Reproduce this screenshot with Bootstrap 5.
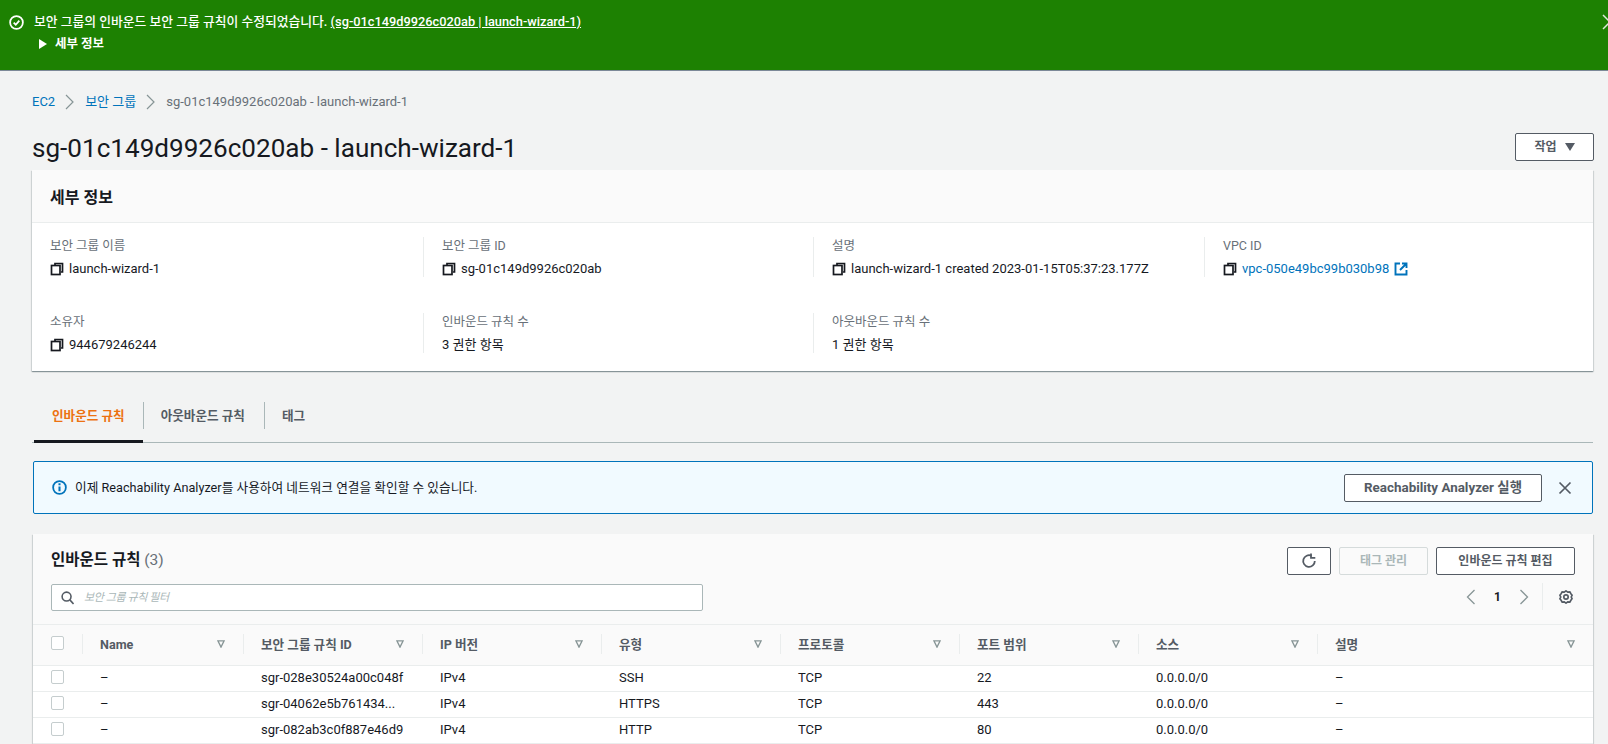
<!DOCTYPE html>
<html lang="ko"><head><meta charset="utf-8"><title>보안 그룹</title>
<link href="https://cdn.jsdelivr.net/npm/bootstrap@5.3.0/dist/css/bootstrap.min.css" rel="stylesheet">
<style>
:root{--ink:#16191f;--muted:#687078;--grey:#545b64;--line:#eaeded;--blue:#0073bb}
html,body{height:744px;overflow:hidden}
body{background:#f2f3f3;color:var(--ink);font-family:"Roboto","Noto Sans CJK KR",sans-serif;font-size:13px;line-height:18px}
svg{display:block;flex:none}
a{color:var(--blue);text-decoration:none}
.flash-bar{height:71px;background:#1d8102;border-bottom:1px solid #7d8998;color:#fff;padding:13px 0 0 9px;font-size:12.8px;font-weight:500;overflow:hidden}
.flash-bar a{color:#fff;text-decoration:underline}
.flash-head{gap:10px}
.flash-more{margin:4px 0 0 30px;font-weight:700;font-size:12.5px}
.flash-x{right:-10px;top:14px}
.page-body{padding:0 14px 0 32px}
.crumbs{height:18px;margin-top:22px;font-size:13px;color:var(--muted)}
.page-title{font-size:26.1px;line-height:30px;font-weight:400;margin:0}
.title-row{margin-top:22px;height:37px}
.aws-btn{background:#fff;border:1px solid var(--grey);border-radius:2px;color:var(--grey);font-size:12px;font-weight:700;height:28px;padding:0;display:inline-flex;align-items:center;justify-content:center}
.btn-action{width:79px}
.btn-reach{width:198px;font-size:13.4px}
.btn-refresh{width:44px}
.btn-tags{width:89px}
.btn-edit{width:139px}
.panel{background:#fff;box-shadow:0 1px 1px rgba(0,28,36,.3),1px 1px 1px rgba(0,28,36,.1),-1px 1px 1px rgba(0,28,36,.1)}
.panel-sheet{margin-right:1px}
.panel-head{background:#fafafa;height:53px;border-bottom:1px solid var(--line);padding:3px 18px 0;font-size:16px;font-weight:700}
.details{height:148px;padding:14px 0 0 0;display:grid;grid-template-columns:391px 390px 391px 1fr;grid-template-rows:40px 40px;row-gap:36px}
.detail-cell{padding-left:18px;border-left:1px solid var(--line)}
.detail-cell:nth-child(4n+1){border-left:0}
.detail-label{color:var(--muted);font-size:12.5px;line-height:18px}
.detail-val{margin-top:5px;line-height:18px;font-size:13px;gap:5px}
.tab-strip{margin-top:21px;height:51px;border-bottom:1px solid #aab7b8;position:relative;margin-right:1px}
.tab-item{height:51px;display:flex;align-items:center;font-size:12.6px;font-weight:700;color:var(--grey);position:relative;padding:0 19px 3px 18px}
.tab-item+.tab-item::before{content:"";position:absolute;left:0;top:10px;height:27px;width:1px;background:#aab7b8}
.tab-on{color:#ec7211;box-shadow:inset 0 -3px 0 var(--ink);margin-left:2px;padding:0 18px 3px 18px}
.info-box{margin:18px 1px 0 1px;height:53px;background:#f1faff;border:1px solid var(--blue);border-radius:2px;padding:0 20px 0 18px;font-size:12.7px}
.rules{margin:20px 1px 0 1px;height:211px;overflow:hidden}
.rules-top{background:#fafafa;height:91px;border-bottom:1px solid var(--line);padding:12px 18px 0 18px;position:relative}
.rules-title{font-size:15.5px;font-weight:700;line-height:28px}
.rules-title span{font-weight:400;color:var(--muted)}
.filter-field{height:27px;width:652px;margin-top:10px;background:#fff;border:1px solid #aab7b8;border-radius:2px;padding-left:9px;font-style:italic;color:#aab7b8;font-size:11px;letter-spacing:-.4px;gap:10px}
.rule-table{table-layout:fixed;width:100%;margin:0;border-collapse:collapse;--bs-table-bg:#fff;font-size:13px}
.rule-table thead th{background:#fafafa;height:40px;padding:0 18px;font-weight:700;color:var(--grey);font-size:12.6px;border-bottom:1px solid var(--line);vertical-align:middle;position:relative}
.rule-table td{height:26px;padding:0 18px;border-bottom:1px solid var(--line);color:var(--ink);vertical-align:middle;white-space:nowrap;overflow:hidden}
.rule-table th+th::before{content:"";position:absolute;left:0;top:9px;height:20px;width:1px;background:var(--line)}
.rule-table .tick{padding-left:18px;padding-right:0}
.col-tick{width:49px}.col-name{width:161px}.col-std{width:179px}
.box-tick{display:block;width:13px;height:14px;border:1px solid #c5cdce;border-radius:2px;background:#fff;margin-top:-3px}
.sort-mark{right:18px;top:15px}
.row-tools{top:13px;right:18px}
.pager{top:49px;right:20px;height:27px;color:#aab7b8}
.pager b{color:var(--ink);font-size:12px;margin:0 18px}
.pager-rule{width:1px;height:27px;background:var(--line);margin:0 16px 0 13px}
.tool-off{background:#fafafa;border-color:#d5dbdb;color:#aab7b8}
</style></head><body>
<svg width="0" height="0" class="position-absolute"><defs>
<symbol id="i-copy" viewBox="0 0 14 14"><g fill="none" stroke="#16191f" stroke-width="1.7"><path d="M5 3V1.500h7.500V10H11"/><rect x="1.500" y="3.500" width="8.500" height="9"/></g></symbol>
<symbol id="i-sort" viewBox="0 0 9 9"><path d="M1 1h7L4.500 8z" fill="none" stroke="#879596" stroke-width="1.500"/></symbol>
<symbol id="i-chev" viewBox="0 0 14 16"><path d="M3 1l7 7-7 7" fill="none" stroke="#879596" stroke-width="1.200"/></symbol>
</defs></svg>
<div class="flash-bar position-relative">
  <div class="d-flex align-items-center flash-head">
    <svg width="15" height="15" viewBox="0 0 16 16" fill="none" stroke="#fff" stroke-width="1.900"><circle cx="8" cy="8" r="6.800"/><path d="M5 8.200l2.200 2.200L11 6"/></svg>
    <span>보안 그룹의 인바운드 보안 그룹 규칙이 수정되었습니다. <a href="#">(sg-01c149d9926c020ab | launch-wizard-1)</a></span>
  </div>
  <div class="flash-more d-flex align-items-center gap-2">
    <svg width="8" height="10" viewBox="0 0 8 10" fill="#fff"><path d="M0 0l8 5-8 5z"/></svg><span>세부 정보</span>
  </div>
  <svg class="position-absolute flash-x" width="16" height="16" viewBox="0 0 16 16" fill="none" stroke="#dfe9db" stroke-width="1.500"><path d="M1 1l14 14M15 1L1 15"/></svg>
</div>
<div class="page-body">
  <div class="crumbs d-flex align-items-center">
    <a href="#">EC2</a>
    <svg class="mx-2" width="14" height="16"><use href="#i-chev"/></svg>
    <a href="#">보안 그룹</a>
    <svg class="mx-2" width="14" height="16"><use href="#i-chev"/></svg>
    <span>sg-01c149d9926c020ab - launch-wizard-1</span>
  </div>
  <div class="title-row d-flex justify-content-between align-items-start">
    <h1 class="page-title">sg-01c149d9926c020ab - launch-wizard-1</h1>
    <button class="aws-btn btn-action gap-2">작업 <svg width="10" height="8" viewBox="0 0 10 8" fill="#545b64"><path d="M0 0h10L5 8z"/></svg></button>
  </div>
  <div class="panel panel-sheet">
    <div class="panel-head d-flex align-items-center">세부 정보</div>
    <div class="details">
      <div class="detail-cell"><div class="detail-label">보안 그룹 이름</div><div class="detail-val d-flex align-items-center"><svg width="14" height="14"><use href="#i-copy"/></svg>launch-wizard-1</div></div>
      <div class="detail-cell"><div class="detail-label">보안 그룹 ID</div><div class="detail-val d-flex align-items-center"><svg width="14" height="14"><use href="#i-copy"/></svg>sg-01c149d9926c020ab</div></div>
      <div class="detail-cell"><div class="detail-label">설명</div><div class="detail-val d-flex align-items-center"><svg width="14" height="14"><use href="#i-copy"/></svg>launch-wizard-1 created 2023-01-15T05:37:23.177Z</div></div>
      <div class="detail-cell"><div class="detail-label">VPC ID</div><div class="detail-val d-flex align-items-center"><svg width="14" height="14"><use href="#i-copy"/></svg><a href="#">vpc-050e49bc99b030b98</a><svg width="14" height="14" viewBox="0 0 14 14" fill="none" stroke="#0073bb" stroke-width="1.900"><path d="M6 1.500H1.500v11h11V8M8 1.500h4.500V6M12.500 1.500L6 8"/></svg></div></div>
      <div class="detail-cell"><div class="detail-label">소유자</div><div class="detail-val d-flex align-items-center"><svg width="14" height="14"><use href="#i-copy"/></svg>944679246244</div></div>
      <div class="detail-cell"><div class="detail-label">인바운드 규칙 수</div><div class="detail-val">3 권한 항목</div></div>
      <div class="detail-cell"><div class="detail-label">아웃바운드 규칙 수</div><div class="detail-val">1 권한 항목</div></div>
    </div>
  </div>
  <div class="tab-strip d-flex">
    <div class="tab-item tab-on">인바운드 규칙</div>
    <div class="tab-item">아웃바운드 규칙</div>
    <div class="tab-item">태그</div>
  </div>
  <div class="info-box d-flex align-items-center">
    <svg class="me-2" width="15" height="15" viewBox="0 0 16 16" fill="none" stroke="#0073bb" stroke-width="1.900"><circle cx="8" cy="8" r="6.800"/><path d="M8 7v5M8 3.500v2" stroke-width="2.200"/></svg>
    <span>이제 Reachability Analyzer를 사용하여 네트워크 연결을 확인할 수 있습니다.</span>
    <button class="aws-btn btn-reach ms-auto">Reachability Analyzer 실행</button>
    <svg class="ms-3" width="14" height="14" viewBox="0 0 14 14" fill="none" stroke="#545b64" stroke-width="1.700"><path d="M1.500 1.500l11 11M12.500 1.500l-11 11"/></svg>
  </div>
  <div class="panel rules">
    <div class="rules-top">
      <div class="rules-title">인바운드 규칙 <span>(3)</span></div>
      <div class="filter-field d-flex align-items-center">
        <svg width="13" height="14" viewBox="0 0 14 15" fill="none" stroke="#545b64" stroke-width="1.700"><circle cx="6" cy="6" r="4.800"/><path d="M9.500 9.500l4 4.500"/></svg><span>보안 그룹 규칙 필터</span>
      </div>
      <div class="row-tools position-absolute d-flex">
        <button class="aws-btn btn-refresh me-2"><svg width="16" height="16" viewBox="0 0 16 16" fill="none" stroke="#545b64" stroke-width="1.800"><path d="M13.800 8A5.800 5.800 0 1 1 10.500 2.800"/><path d="M10 .5v4.300h4.300"/></svg></button>
        <button class="aws-btn btn-tags tool-off me-2">태그 관리</button>
        <button class="aws-btn btn-edit">인바운드 규칙 편집</button>
      </div>
      <div class="pager position-absolute d-flex align-items-center">
        <svg width="10" height="16" viewBox="0 0 10 16" fill="none" stroke="#879596" stroke-width="1.300"><path d="M8.500 1L1.500 8l7 7"/></svg>
        <b>1</b>
        <svg width="10" height="16" viewBox="0 0 10 16" fill="none" stroke="#879596" stroke-width="1.300"><path d="M1.500 1l7 7-7 7"/></svg>
        <span class="pager-rule"></span>
        <svg width="14" height="14" viewBox="0 0 16 16" fill="none" stroke="#545b64" stroke-width="1.900"><path d="M8 1l2 1.500 2.400-.300 1.200 2.100 1.400 1.700L14 8l.900 2-1.300 1.700-1.200 2.100-2.400-.300L8 15l-2-1.500-2.400.300-1.200-2.100L1 10l1-2-1-2 1.400-1.700 1.200-2.100 2.400.300z"/><circle cx="8" cy="8" r="2.500"/></svg>
      </div>
    </div>
    <table class="table rule-table">
      <colgroup><col class="col-tick"><col class="col-name"><col class="col-std"><col class="col-std"><col class="col-std"><col class="col-std"><col class="col-std"><col class="col-std"><col></colgroup>
      <thead><tr>
        <th class="tick"><span class="box-tick"></span></th>
        <th>Name<svg class="sort-mark position-absolute" width="8" height="8"><use href="#i-sort"/></svg></th>
        <th>보안 그룹 규칙 ID<svg class="sort-mark position-absolute" width="8" height="8"><use href="#i-sort"/></svg></th>
        <th>IP 버전<svg class="sort-mark position-absolute" width="8" height="8"><use href="#i-sort"/></svg></th>
        <th>유형<svg class="sort-mark position-absolute" width="8" height="8"><use href="#i-sort"/></svg></th>
        <th>프로토콜<svg class="sort-mark position-absolute" width="8" height="8"><use href="#i-sort"/></svg></th>
        <th>포트 범위<svg class="sort-mark position-absolute" width="8" height="8"><use href="#i-sort"/></svg></th>
        <th>소스<svg class="sort-mark position-absolute" width="8" height="8"><use href="#i-sort"/></svg></th>
        <th>설명<svg class="sort-mark position-absolute" width="8" height="8"><use href="#i-sort"/></svg></th>
      </tr></thead>
      <tbody>
        <tr><td class="tick"><span class="box-tick"></span></td><td>–</td><td>sgr-028e30524a00c048f</td><td>IPv4</td><td>SSH</td><td>TCP</td><td>22</td><td>0.0.0.0/0</td><td>–</td></tr>
        <tr><td class="tick"><span class="box-tick"></span></td><td>–</td><td>sgr-04062e5b761434...</td><td>IPv4</td><td>HTTPS</td><td>TCP</td><td>443</td><td>0.0.0.0/0</td><td>–</td></tr>
        <tr><td class="tick"><span class="box-tick"></span></td><td>–</td><td>sgr-082ab3c0f887e46d9</td><td>IPv4</td><td>HTTP</td><td>TCP</td><td>80</td><td>0.0.0.0/0</td><td>–</td></tr>
      </tbody>
    </table>
  </div>
</div>
<script src="https://cdn.jsdelivr.net/npm/bootstrap@5.3.0/dist/js/bootstrap.bundle.min.js"></script>
</body></html>
